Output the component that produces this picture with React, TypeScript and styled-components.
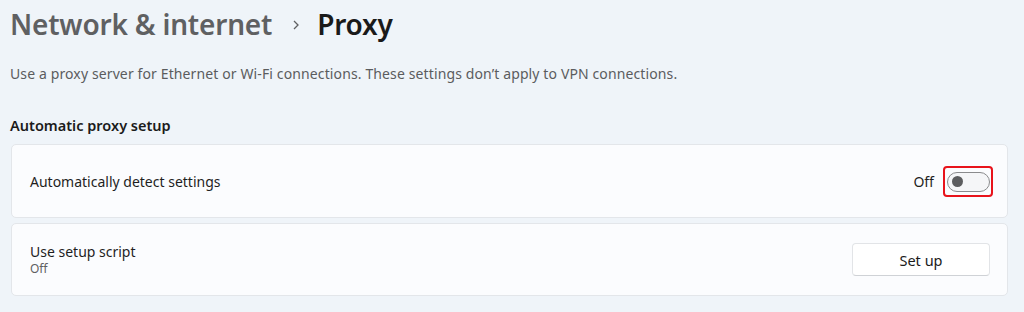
import React, { useState } from "react";
import styled, { createGlobalStyle } from "styled-components";

const GlobalStyle = createGlobalStyle`
  html, body {
    margin: 0;
    padding: 0;
    background: #eff4f9;
  }
  body {
    font-family: "Noto Sans", "Open Sans", sans-serif;
    color: #1b1b1b;
  }
`;

const Page = styled.div`
  width: 1024px;
  height: 312px;
  box-sizing: border-box;
  padding: 4px 16px 0 10px;
  overflow: hidden;
`;

const Breadcrumb = styled.h1`
  display: flex;
  align-items: center;
  margin: 0;
  height: 40px;
  font-size: 28px;
  font-weight: 600;
  letter-spacing: -0.2px;
`;

const Crumb = styled.span<{ $current?: boolean }>`
  color: ${(p) => (p.$current ? "#1a1a1a" : "#5f6062")};
`;

const Chevron = styled.svg`
  width: 10px;
  height: 10px;
  margin: 2px 16px 0 19px;
  stroke: #5f6062;
`;

const Description = styled.p`
  margin: 20px 0 0;
  font-size: 14px;
  letter-spacing: 0.12px;
  color: #5b5c5e;
`;

const SectionTitle = styled.h2`
  margin: 32px 0 9px;
  font-size: 14.5px;
  font-weight: 600;
  color: #1b1b1b;
`;

const CardList = styled.div`
  display: flex;
  flex-direction: column;
  gap: 5px;
  margin-left: 1px;
`;

const Card = styled.div<{ $height: number }>`
  display: flex;
  align-items: center;
  justify-content: space-between;
  height: ${(p) => p.$height}px;
  box-sizing: border-box;
  padding: 0 17px 0 18px;
  background: #fbfcfe;
  border: 1px solid #e3e6ea;
  border-radius: 5px;
`;

const Label = styled.div`
  display: flex;
  flex-direction: column;
  font-size: 14px;
  color: #1f1f1f;
`;

const SubLabel = styled.span`
  font-size: 12px;
  color: #5f6062;
  margin-top: -1px;
`;

const Controls = styled.div`
  display: flex;
  align-items: center;
  gap: 9px;
  font-size: 14px;
  color: #1f1f1f;
`;

const Highlight = styled.div`
  display: flex;
  padding: 4px 1px 3px 2px;
  border: 2px solid #e8131b;
  border-radius: 4px;
  margin-right: -3px;
`;

const Toggle = styled.button<{ $on: boolean }>`
  position: relative;
  width: 43px;
  height: 20px;
  padding: 0;
  box-sizing: border-box;
  border-radius: 10px;
  border: 1px solid #8a8b8d;
  background: ${(p) => (p.$on ? "#005fb8" : "#f5f6f8")};
  cursor: pointer;

  &::after {
    content: "";
    position: absolute;
    top: 3.5px;
    left: ${(p) => (p.$on ? "26px" : "4px")};
    width: 11px;
    height: 11px;
    border-radius: 50%;
    background: ${(p) => (p.$on ? "#ffffff" : "#5c5d5f")};
  }
`;

const Button = styled.button`
  width: 138px;
  height: 33px;
  font-family: inherit;
  font-size: 14.5px;
  color: #1b1b1b;
  background: #ffffff;
  border: 1px solid #e2e4e7;
  border-bottom-color: #cfd2d6;
  border-radius: 4px;
  cursor: pointer;
`;

const App: React.FC = () => {
  const [autoDetect, setAutoDetect] = useState(false);

  return (
    <>
      <GlobalStyle />
      <Page>
        <Breadcrumb>
          <Crumb>Network &amp; internet</Crumb>
          <Chevron viewBox="0 0 10 10" fill="none" strokeWidth={1.3}>
            <path d="M3 1l4 4-4 4" />
          </Chevron>
          <Crumb $current>Proxy</Crumb>
        </Breadcrumb>

        <Description>
          Use a proxy server for Ethernet or Wi-Fi connections. These settings don’t apply to VPN
          connections.
        </Description>

        <SectionTitle>Automatic proxy setup</SectionTitle>

        <CardList>
          <Card $height={74}>
            <Label>Automatically detect settings</Label>
            <Controls>
              {autoDetect ? "On" : "Off"}
              <Highlight>
                <Toggle
                  $on={autoDetect}
                  aria-label="Automatically detect settings"
                  onClick={() => setAutoDetect(!autoDetect)}
                />
              </Highlight>
            </Controls>
          </Card>
          <Card $height={73}>
            <Label>
              Use setup script
              <SubLabel>Off</SubLabel>
            </Label>
            <Button>Set up</Button>
          </Card>
        </CardList>
      </Page>
    </>
  );
};

export default App;
